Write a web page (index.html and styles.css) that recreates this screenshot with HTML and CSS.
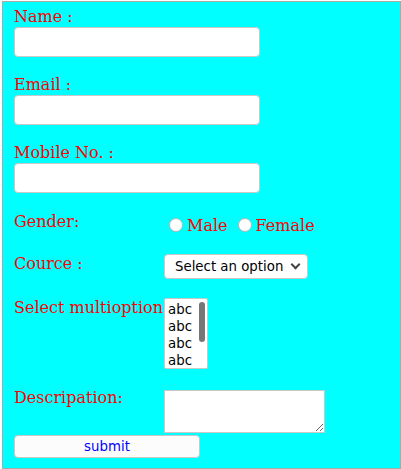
FILE: index.html
```html
<!DOCTYPE html>
<html>
<head>
<meta charset="utf-8">
<link rel="stylesheet" href="styles.css">
</head>
<body>
<form class="form">
  <div class="field">
    <label class="lbl">Name :</label>
    <input class="text" type="text">
  </div>
  <div class="field">
    <label class="lbl">Email :</label>
    <input class="text" type="text">
  </div>
  <div class="field last">
    <label class="lbl">Mobile No. :</label>
    <input class="text" type="text">
  </div>
  <div class="row">
    <span class="lbl col">Gender:</span>
    <span class="radios"><input class="radio" type="radio" name="g"><span>Male</span> <input class="radio" type="radio" name="g"><span>Female</span></span>
  </div>
  <div class="row">
    <span class="lbl col">Cource :</span>
    <span class="select-wrap"><select class="course"><option>Select an option</option></select></span>
  </div>
  <div class="row">
    <span class="lbl col">Select multioption</span>
    <span class="multi-wrap">
      <select class="multi" multiple>
        <option>abc</option>
        <option>abc</option>
        <option>abc</option>
        <option>abc</option>
        <option>abc</option>
        <option>abc</option>
      </select>
      <span class="thumb"></span>
    </span>
  </div>
  <div class="row desc">
    <span class="lbl col">Descripation:</span>
    <textarea class="area"></textarea>
  </div>
  <button class="submit" type="button">submit</button>
</form>
</body>
</html>
```
FILE: styles.css
```css
html { background: #fff; }
body { margin: 0; }

.form {
  margin: 1px 0 0 2px;
  width: 399px;
  height: 468px;
  box-sizing: border-box;
  border: 1px solid #a9a9a9;
  background: #00ffff;
  padding: 5px 11px 0;
  font-family: "DejaVu Serif", serif;
  font-size: 16px;
  color: #ff0000;
}

.lbl {
  line-height: 19px;
  white-space: nowrap;
}

.field .lbl {
  display: block;
  padding-bottom: 1px;
}

.text {
  display: block;
  width: 246px;
  height: 30px;
  box-sizing: border-box;
  border: 1px solid #c8c8c8;
  border-radius: 4px;
  background: #fff;
  margin: 0 0 18px;
  padding: 0 4px;
}

.field.last .text { margin-bottom: 19px; }

.row {
  display: flex;
  align-items: flex-start;
  margin-bottom: 19px;
}

.col {
  width: 150px;
  flex-shrink: 0;
}

.radios {
  margin-top: 4px;
  line-height: 19px;
  white-space: nowrap;
}

.radio {
  appearance: none;
  -webkit-appearance: none;
  width: 14px;
  height: 14px;
  box-sizing: border-box;
  border: 1px solid #b4b4b4;
  border-radius: 50%;
  background: #fff;
  margin: 0 4px 0 5px;
  vertical-align: -1px;
}

.select-wrap {
  position: relative;
  display: block;
  width: 144px;
  height: 25px;
}

.select-wrap::after {
  content: "";
  position: absolute;
  left: 128px;
  top: 7px;
  width: 5px;
  height: 5px;
  border-right: 2px solid #444;
  border-bottom: 2px solid #444;
  transform: rotate(45deg);
  pointer-events: none;
}

.course {
  appearance: none;
  -webkit-appearance: none;
  display: block;
  width: 144px;
  height: 25px;
  box-sizing: border-box;
  border: 1px solid #c8c8c8;
  border-radius: 4px;
  background: #fff;
  font-family: "DejaVu Sans", sans-serif;
  font-size: 13.33px;
  color: #000;
  padding: 0 0 0 10px;
  margin: 0;
}

.multi-wrap {
  position: relative;
  display: block;
  width: 44px;
  height: 71px;
}

.multi {
  display: block;
  width: 44px;
  height: 71px;
  box-sizing: border-box;
  border: 1px solid #c8c8c8;
  background: #fff;
  font-family: "DejaVu Sans", sans-serif;
  font-size: 13.33px;
  color: #000;
  margin: 0;
  padding: 3px 0 0;
  scrollbar-width: none;
  overflow: hidden;
}

.multi option { padding: 0 3px 1px; }

.thumb {
  position: absolute;
  left: 35px;
  top: 4px;
  width: 6px;
  height: 40px;
  border-radius: 3px;
  background: #777;
}

.desc { margin-bottom: 0; }

.area {
  width: 161px;
  height: 43px;
  box-sizing: border-box;
  border: 1px solid #c8c8c8;
  background: #fff;
  margin: 2px 0 0;
  padding: 2px;
}

.submit {
  display: block;
  width: 186px;
  height: 23px;
  box-sizing: border-box;
  margin: 2px 0 0;
  border: 1px solid #c8c8c8;
  border-radius: 4px;
  background: #fcfcfc;
  color: #0000ff;
  font-family: "DejaVu Sans", sans-serif;
  font-size: 13.33px;
  padding: 0;
}
```
